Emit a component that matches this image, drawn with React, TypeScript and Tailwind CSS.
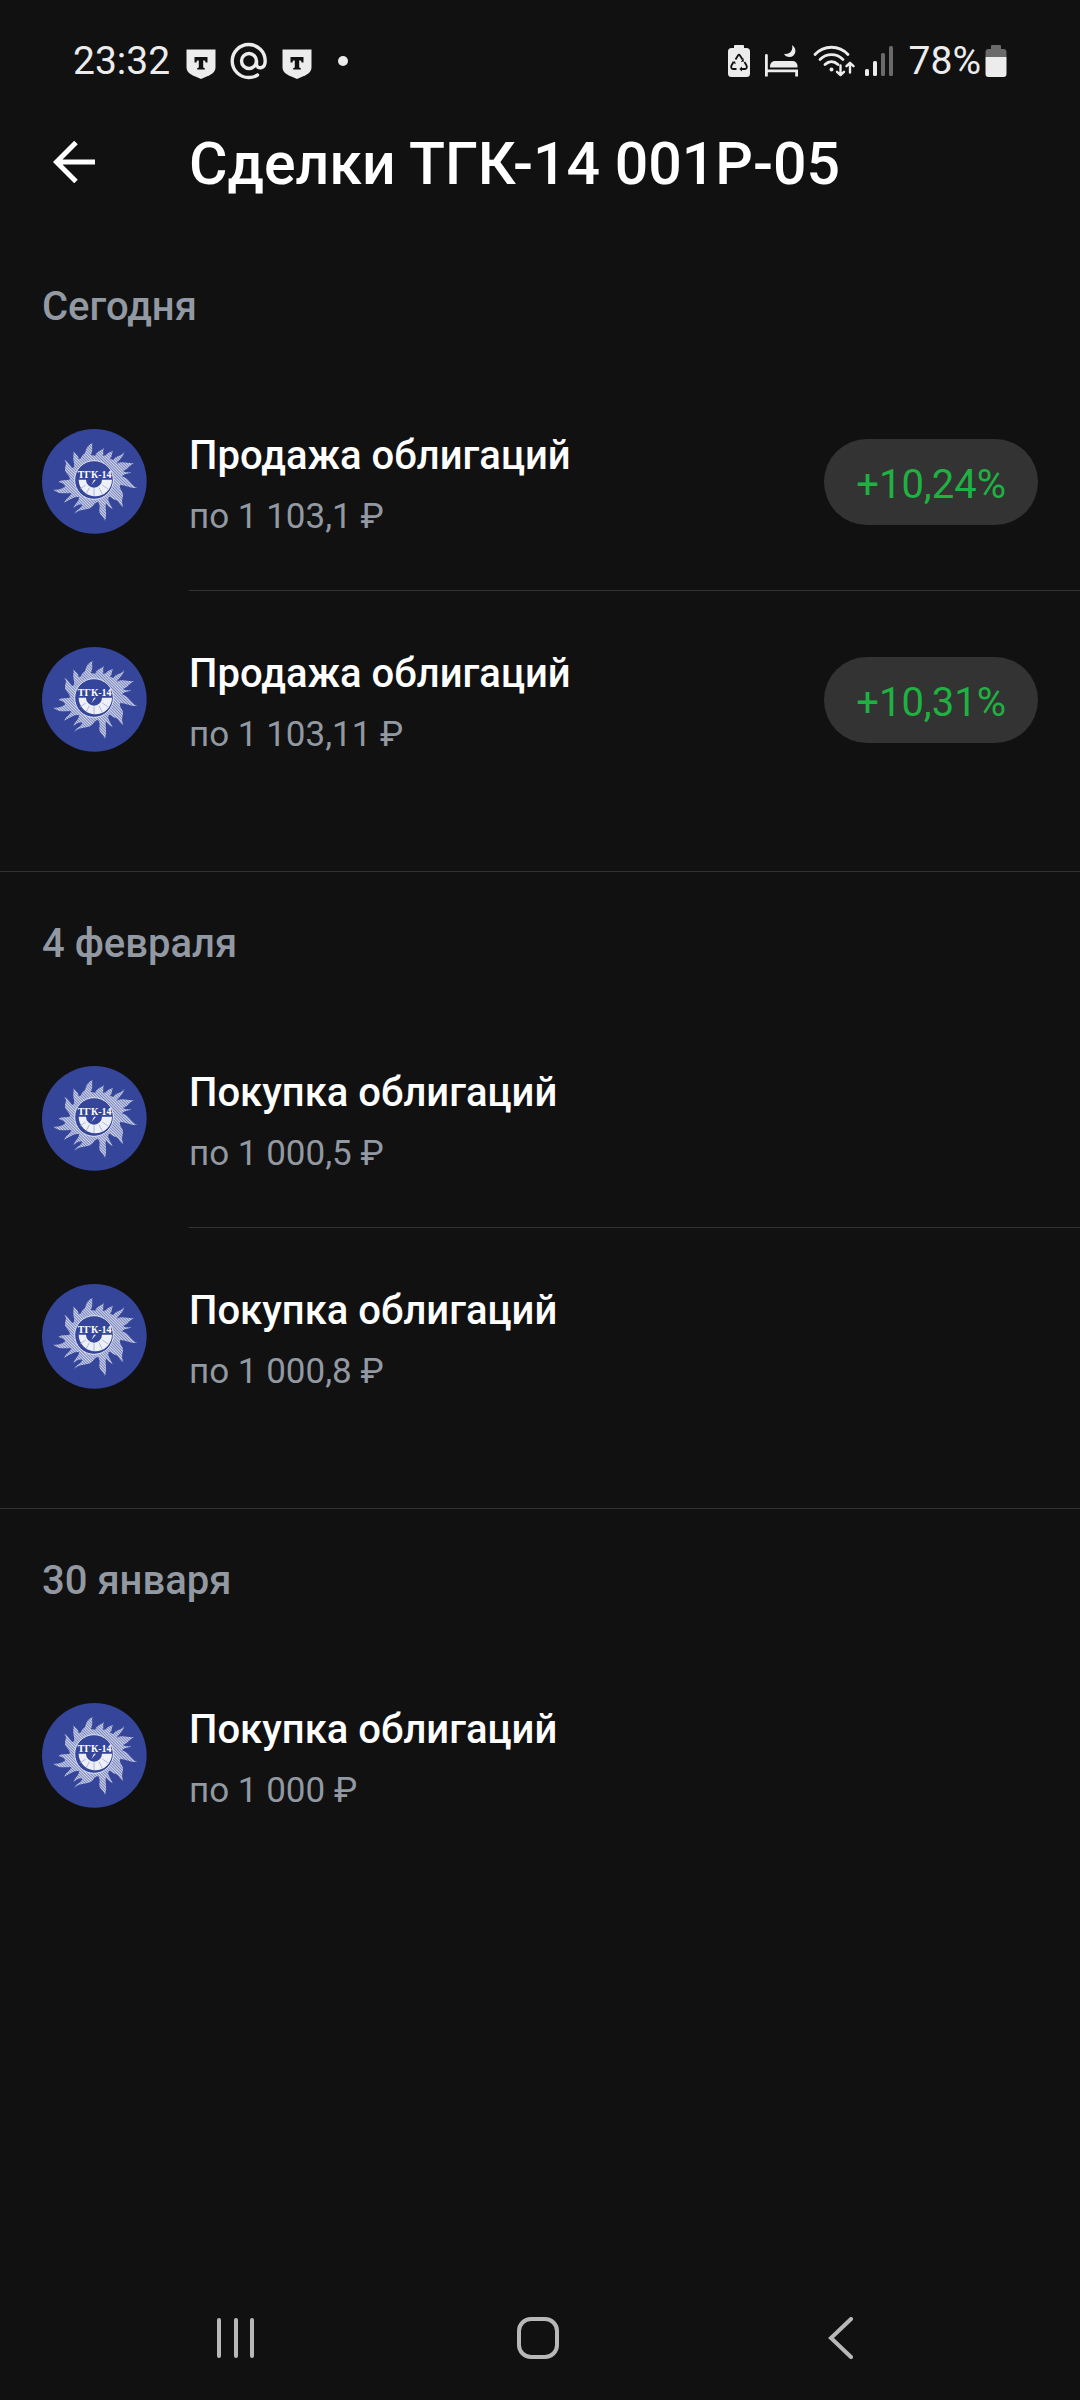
import type { ReactNode } from "react"

type Deal = {
  kind: string
  price: string
  profit?: string
}

type DaySection = {
  day: string
  deals: Deal[]
}

const sections: DaySection[] = [
  {
    day: "Сегодня",
    deals: [
      { kind: "Продажа облигаций", price: "по 1 103,1 ₽", profit: "+10,24%" },
      { kind: "Продажа облигаций", price: "по 1 103,11 ₽", profit: "+10,31%" },
    ],
  },
  {
    day: "4 февраля",
    deals: [
      { kind: "Покупка облигаций", price: "по 1 000,5 ₽" },
      { kind: "Покупка облигаций", price: "по 1 000,8 ₽" },
    ],
  },
  {
    day: "30 января",
    deals: [{ kind: "Покупка облигаций", price: "по 1 000 ₽" }],
  },
]

function ShieldIcon() {
  return (
    <svg className="mt-1.5 h-[30px] w-[30px]" viewBox="0 0 30 30" aria-hidden="true">
      <path d="M.5.5h29v17.500c0 4-2.500 6.500-6 8.300L15 30l-8.500-3.700c-3.500-1.800-6-4.300-6-8.300z" fill="#ececec" />
      <path d="M8.500 8h13v5.500h-2c0-1.500-.5-2-1.500-2h-.8v6c0 1.200.4 1.500 1.600 1.500v1.500h-7.600V19c1.200 0 1.600-.3 1.600-1.500v-6H12c-1 0-1.500.5-1.500 2h-2z" fill="#111" />
    </svg>
  )
}

function MailIcon() {
  return (
    <svg className="h-[38px] w-[38px]" viewBox="0 0 38 38" fill="none" stroke="#ececec" strokeWidth="3.400" strokeLinecap="round" aria-hidden="true">
      <circle cx="19" cy="19" r="7.500" />
      <path d="M26.500 19v3c0 5.500 8.700 5.500 8.700-3a16.500 16.500 0 1 0-16.200 16.500c3.500 0 6-.8 8.500-2.500" />
    </svg>
  )
}

function BatteryRecycleIcon() {
  return (
    <svg className="h-[34px] w-6" viewBox="0 0 24 34" aria-hidden="true">
      <path d="M8 1h8a1 1 0 0 1 1 1v2h2.500A3.500 3.500 0 0 1 23 7.500v22a3.500 3.500 0 0 1-3.500 3.500h-15A3.500 3.500 0 0 1 1 29.500v-22A3.500 3.500 0 0 1 4.500 4H7V2a1 1 0 0 1 1-1z" fill="#ececec" />
      <g fill="none" stroke="#111" strokeWidth="1.800">
        <path d="M8.500 15.500 11 11.500q1-1.500 2 0l2.500 4" />
        <path d="M6.500 18 4.500 21.500c-.9 1.800 0 3.500 1.500 3.500h3.500" />
        <path d="m17.500 18 2 3.500c.9 1.800 0 3.500-1.500 3.500h-3.500" />
      </g>
      <path d="m14 18 3-.5-.7-3.500zM5 18l3-.7.7 3zM15 22.500v5L12.300 25z" fill="#111" />
    </svg>
  )
}

function BedIcon() {
  return (
    <svg className="h-[34px] w-[34px]" viewBox="0 0 34 34" fill="#ececec" aria-hidden="true">
      <path d="M0 11.500a1.400 1.400 0 0 1 2.800 0V25.500H33v7h-2.800v-4.200H2.800v4.200H0z" />
      <path d="M5 23.500V22a5 5 0 0 1 5-5h17.500a5 5 0 0 1 5 5v1.500z" />
      <path d="M27 1c6 4 3.500 12-2.500 12-2.500 0-4.500-1-5.500-3.200C24.500 11 28.500 6.500 27 1z" />
    </svg>
  )
}

function WifiIcon() {
  return (
    <svg className="h-[34px] w-[42px]" viewBox="0 0 42 34" fill="none" stroke="#ececec" strokeWidth="2.800" strokeLinecap="round" strokeLinejoin="round" aria-hidden="true">
      <path d="M2 10.500C11 .8 26 .8 35 10.500" />
      <path d="M7 15.500c6.500-6.500 16.500-6.500 23 0" />
      <path d="M12 20.500c4-3.800 9-3.800 13 0" />
      <circle cx="18.500" cy="25.500" r="1" fill="#ececec" strokeWidth="2" />
      <path d="M27.500 21.500V31M24 27.800l3.500 3.400 3.500-3.400" strokeWidth="2.400" />
      <path d="M37 28.500V19M33.500 22.200 37 18.800l3.500 3.400" strokeWidth="2.400" />
    </svg>
  )
}

function SignalIcon() {
  return (
    <svg className="h-[30px] w-7" viewBox="0 0 28 30" aria-hidden="true">
      <rect x="0" y="23" width="4" height="7" rx="1.500" fill="#ececec" />
      <rect x="8" y="15" width="4" height="15" rx="1.500" fill="#ececec" />
      <rect x="16" y="7" width="4" height="23" rx="1.500" fill="#6a6a6a" />
      <rect x="24" y="0" width="4" height="30" rx="1.500" fill="#6a6a6a" />
    </svg>
  )
}

function BatteryIcon() {
  return (
    <svg className="h-[34px] w-[22px]" viewBox="0 0 22 34" aria-hidden="true">
      <path d="M7 1h8a1 1 0 0 1 1 1v3h2.500A3 3 0 0 1 21.500 8v5H.5V8a3 3 0 0 1 3-3H6V2a1 1 0 0 1 1-1z" fill="#6a6a6a" />
      <path d="M.5 13h21v17a3 3 0 0 1-3 3h-15a3 3 0 0 1-3-3z" fill="#ececec" />
    </svg>
  )
}

function StatusBar() {
  return (
    <div className="flex h-[122px] items-center justify-between px-[73px] text-[39px] text-[#ececec]">
      <div className="flex items-center gap-3.5">
        <span className="pr-0.5">23:32</span>
        <ShieldIcon />
        <MailIcon />
        <ShieldIcon />
        <span className="ml-3 size-[10px] rounded-full bg-[#ececec]" />
      </div>
      <div className="flex items-center">
        <div className="flex items-center gap-3.5 pr-2.5">
          <BatteryRecycleIcon />
          <BedIcon />
          <WifiIcon />
        </div>
        <SignalIcon />
        <span className="pl-4 pr-1">78%</span>
        <BatteryIcon />
      </div>
    </div>
  )
}

function IssuerLogo() {
  return (
    <svg className="size-[105px] shrink-0" viewBox="0 0 315 315" role="img" aria-label="ТГК-14">
      <defs>
        <pattern id="hatch" width="6" height="6" patternUnits="userSpaceOnUse" patternTransform="rotate(45)">
          <rect width="6" height="6" fill="#4a5aa6" />
          <rect width="6" height="4" fill="#d3d8ec" />
        </pattern>
      </defs>
      <circle cx="157" cy="157" r="157" fill="#34459a" />
      <path
        fill="url(#hatch)"
        d="M151 42C149 56 154 66 146 78L160 80C164 66 176 66 187 57C180 68 187 74 182 81L192 79C197 69 205 70 213 65C208 75 212 82 204 89L214 93C221 78 237 84 247 68C243 88 230 91 224 105C242 94 257 105 278 102C262 108 257 122 243 126C250 132 257 128 268 130C258 136 246 134 240 142C262 148 265 168 285 177C264 179 252 168 235 168C229 180 246 186 243 202C241 212 238 218 244 234C232 228 232 216 221 213C211 211 208 204 202 203C193 213 205 222 212 241C204 236 198 232 192 223C188 236 197 252 189 275C184 261 170 257 172 242C173 232 174 226 168 219C154 222 156 235 138 240C120 243 112 243 97 254C103 242 116 240 121 228C112 224 104 230 94 237C99 223 112 216 111 205C98 201 84 213 66 221C73 207 85 204 88 192C71 192 52 198 34 182C49 184 60 180 70 172C64 162 57 161 49 159C62 149 73 157 84 151C83 136 67 133 69 118C70 108 76 104 67 92C80 98 82 110 92 117C102 112 92 97 94 82C94 76 96 74 94 66C102 77 110 79 110 91L117 88C120 76 128 77 131 66C134 54 140 48 151 42z"
      />
      <circle cx="156" cy="153" r="58" fill="#34459a" stroke="#dfe3f1" strokeWidth="3" />
      <path d="M110 152h22a24 24 0 0 0 48 0h30a50 50 0 0 1-100 0z" fill="#eef0f8" />
      <path d="M156 178v24M142 176l-10 20M171 176l10 20M131 168l-17 12M181 168l17 12" stroke="#8f9bcb" strokeWidth="2" />
      <path d="M162 152h-6l-8 16z" fill="#eef0f8" />
      <text x="158" y="147" textAnchor="middle" className="fill-white font-['Liberation_Serif',serif] text-[30px] font-bold">
        ТГК-14
      </text>
    </svg>
  )
}

function DealRow({ deal, last }: { deal: Deal; last: boolean }) {
  return (
    <li className="flex h-[218px] items-stretch pl-[42px]">
      <div className="flex items-center pb-0.5">
        <IssuerLogo />
      </div>
      <div className={`ml-[42px] flex flex-1 items-center justify-between pr-[42px] ${last ? "" : "border-b border-[#333]"}`}>
        <div className="pt-2 leading-[61px]">
          <div className="text-[40px] font-medium text-white">{deal.kind}</div>
          <div className="text-[35px] text-[#9299a2]">{deal.price}</div>
        </div>
        {deal.profit && (
          <span className="flex h-[86px] items-center rounded-full bg-[#333] px-8 pt-1.5 text-[40px] text-[#1fb141]">
            {deal.profit}
          </span>
        )}
      </div>
    </li>
  )
}

function NavButton({ label, children }: { label: string; children: ReactNode }) {
  return (
    <button aria-label={label} className="flex h-24 w-32 items-center justify-center text-[#b8b8b8]">
      {children}
    </button>
  )
}

function SystemNav() {
  return (
    <nav className="flex h-[124px] items-center justify-center gap-[174px] pr-1">
      <NavButton label="Недавние">
        <svg className="size-[42px]" viewBox="0 0 42 42" fill="none" stroke="currentColor" strokeWidth="4" strokeLinecap="round">
          <path d="M4 3v36M21 3v36M37 3v36" />
        </svg>
      </NavButton>
      <NavButton label="Домой">
        <svg className="size-[42px]" viewBox="0 0 42 42" fill="none" stroke="currentColor" strokeWidth="4">
          <rect x="2" y="2" width="38" height="38" rx="12" />
        </svg>
      </NavButton>
      <NavButton label="Назад">
        <svg className="size-[42px]" viewBox="0 0 42 42" fill="none" stroke="currentColor" strokeWidth="4" strokeLinecap="round">
          <path d="M32 2 12 21l20 19" />
        </svg>
      </NavButton>
    </nav>
  )
}

export default function App() {
  return (
    <div className="flex min-h-screen flex-col bg-[#111] font-['Roboto','Noto_Sans',sans-serif]">
      <StatusBar />
      <header className="flex h-[113px] items-start pl-[42px]">
        <button aria-label="Назад" className="flex h-[80px] w-16 items-center justify-center text-white">
          <svg className="size-[42px]" viewBox="0 0 42 42" fill="none" stroke="currentColor" strokeWidth="5">
            <path d="M42 21H4M23 1.500 3.500 21 23 40.500" />
          </svg>
        </button>
        <h1 className="ml-[83px] text-[59px] font-medium leading-[84px] text-white">Сделки ТГК-14 001Р-05</h1>
      </header>

      <main className="flex-1">
        {sections.map((section) => (
          <section key={section.day} className="border-b border-[#333] pb-[62px] last:border-b-0">
            <h2 className="pl-[42px] pt-1.5 text-[40px] font-medium leading-[132px] text-[#9299a2]">{section.day}</h2>
            <ul>
              {section.deals.map((deal, i) => (
                <DealRow key={i} deal={deal} last={i === section.deals.length - 1} />
              ))}
            </ul>
          </section>
        ))}
      </main>

      <SystemNav />
    </div>
  )
}
